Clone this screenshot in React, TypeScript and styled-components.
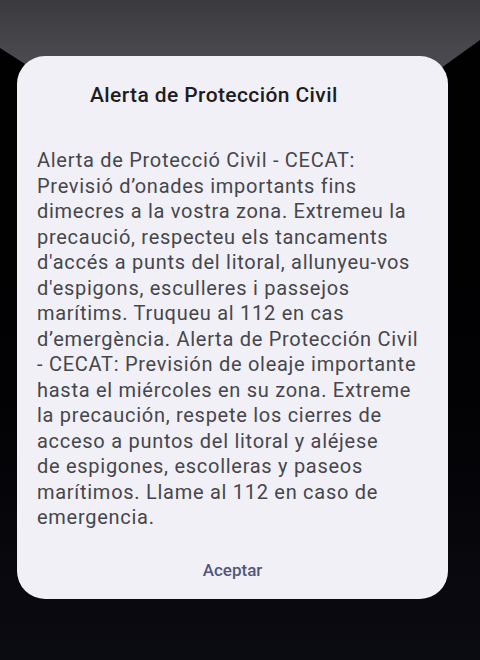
import styled, { createGlobalStyle } from 'styled-components';

const GlobalStyle = createGlobalStyle`
    html, body {
        margin: 0;
        padding: 0;
        background: #000;
    }
    * {
        box-sizing: border-box;
    }
`;

const Screen = styled.div`
    position: relative;
    width: 480px;
    height: 660px;
    overflow: hidden;
    background: linear-gradient(180deg, #000 0%, #020204 60%, #0b0b12 100%);
    padding: 56px 32px 0 17px;
    font-family: Roboto, 'Noto Sans', sans-serif;

    &::before {
        content: '';
        position: absolute;
        left: 0;
        top: 0;
        width: 100%;
        height: 120px;
        background: linear-gradient(180deg, #3b3b3f 0%, #47474c 40%, #55555c 100%);
        clip-path: polygon(0 0, 100% 0, 100% 40px, 380px 112px, 100px 112px, 0 48px);
    }
`;

const Dialog = styled.div`
    position: relative;
    width: 431px;
    height: 543px;
    background: #f0f0f6;
    border-radius: 28px;
    display: flex;
    flex-direction: column;
    padding: 25px 0 0 20px;
`;

const Title = styled.h2`
    margin: 0 0 0 53px;
    font-size: 21px;
    line-height: 28px;
    font-weight: 500;
    color: #1d1d21;
    letter-spacing: 0.4px;
`;

const Message = styled.p`
    margin: 39px 0 0 0;
    font-size: 20px;
    line-height: 25.5px;
    font-weight: 400;
    color: #46464c;
    letter-spacing: 0.72px;
    white-space: nowrap;
`;

const Line = styled.span`
    display: block;
`;

const Actions = styled.div`
    margin-top: auto;
    display: flex;
    justify-content: center;
    padding: 0 20px 18px 0;
`;

const ActionButton = styled.button`
    border: none;
    background: none;
    padding: 0;
    font-family: inherit;
    font-size: 17px;
    line-height: 22px;
    font-weight: 500;
    color: #51577c;
`;

const lines = [
    'Alerta de Protecció Civil - CECAT:',
    'Previsió d’onades importants fins',
    'dimecres a la vostra zona. Extremeu la',
    'precaució, respecteu els tancaments',
    "d'accés a punts del litoral, allunyeu-vos",
    "d'espigons, esculleres i passejos",
    'marítims. Truqueu al 112 en cas',
    'd’emergència. Alerta de Protección Civil',
    '- CECAT: Previsión de oleaje importante',
    'hasta el miércoles en su zona. Extreme',
    'la precaución, respete los cierres de',
    'acceso a puntos del litoral y aléjese',
    'de espigones, escolleras y paseos',
    'marítimos. Llame al 112 en caso de',
    'emergencia.',
];

export default function App() {
    return (
        <>
            <GlobalStyle />
            <Screen>
                <Dialog>
                    <Title>Alerta de Protección Civil</Title>
                    <Message>
                        {lines.map((line) => (
                            <Line key={line}>{line}</Line>
                        ))}
                    </Message>
                    <Actions>
                        <ActionButton>Aceptar</ActionButton>
                    </Actions>
                </Dialog>
            </Screen>
        </>
    );
}
